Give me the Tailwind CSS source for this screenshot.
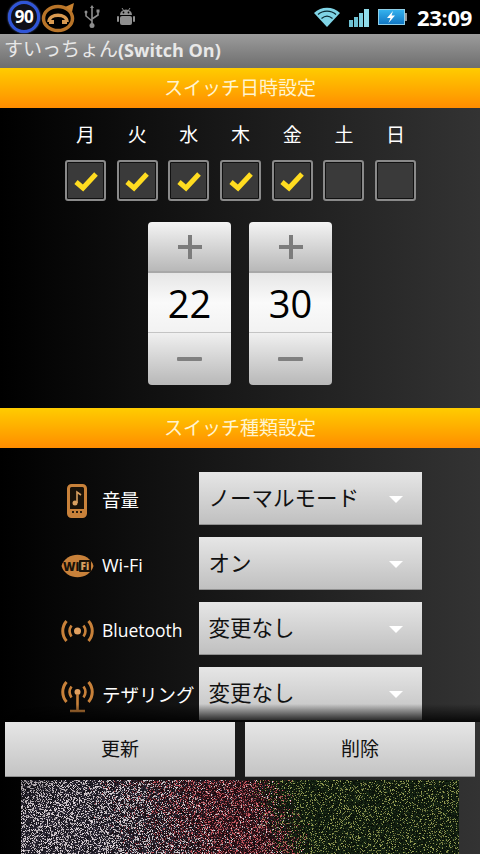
<!doctype html>
<html lang="ja">
  <head>
    <meta charset="UTF-8">
    <title>すいっちょん</title>
    <script src="https://cdn.jsdelivr.net/npm/@tailwindcss/browser@4"></script>
  </head>
  <body class="bg-black">
    <div class="w-[480px] h-[854px] overflow-hidden flex flex-col bg-black text-white font-['Open_Sans','Noto_Sans_CJK_JP',sans-serif]">

      <!-- status bar -->
      <div class="h-[34px] flex items-center pl-[8px] pr-[8px] shrink-0">
        <div class="w-[32px] h-[32px] rounded-full border-[3px] border-[#2f55d8] bg-[#101018] shadow-[0_0_2px_#6f8fff] flex items-center justify-center text-[17px] font-bold text-white tracking-[-0.5px]">90</div>
        <svg class="ml-[1px]" width="35" height="32" viewBox="0 0 35 32" fill="none">
          <ellipse cx="17" cy="17.500" rx="14.500" ry="12" stroke="#b87428" stroke-width="3.500"/>
          <path d="M24 6 L33 2 L31 11 Z" fill="#c8812f"/>
          <path d="M8 21 C8 12 26 12 26 21" stroke="#d99a50" stroke-width="3.500"/>
          <path d="M8 19h5v4H8zM21 19h5v4h-5z" fill="#d99a50"/>
        </svg>
        <svg class="ml-[7px]" width="18" height="24" viewBox="0 0 18 24" fill="none" stroke="#8d8d8d" stroke-width="1.600">
          <path d="M9 3v18M3 8v3l6 5M15 7v3l-6 4"/>
          <path d="M9 0l2 3H7z" fill="#8d8d8d" stroke="none"/>
          <circle cx="3" cy="7" r="1.500" fill="#8d8d8d" stroke="none"/>
          <rect x="13.500" y="4.500" width="3" height="3" fill="#8d8d8d" stroke="none"/>
          <circle cx="9" cy="20.500" r="2.500" fill="#8d8d8d" stroke="none"/>
        </svg>
        <svg class="ml-[15px]" width="20" height="20" viewBox="0 0 20 20" fill="#8f8f8f">
          <path d="M4 8a6 5.500 0 0 1 12 0z"/>
          <path d="M6 1l2 3M14 1l-2 3" stroke="#8f8f8f" stroke-width="1"/>
          <rect x="4" y="9" width="12" height="9" rx="2"/>
          <rect x="1" y="9" width="2" height="6" rx="1"/>
          <rect x="17" y="9" width="2" height="6" rx="1"/>
          <circle cx="7.500" cy="5.500" r="0.900" fill="#000"/>
          <circle cx="12.500" cy="5.500" r="0.900" fill="#000"/>
        </svg>
        <div class="flex-1"></div>
        <svg width="28" height="22" viewBox="0 0 28 22">
          <path d="M1 7 C8 0 20 0 27 7 L14 21 Z" fill="#7fd4e6"/>
          <path d="M5 8.500 C10 4 18 4 23 8.500" stroke="#0b2a33" stroke-width="1.200" fill="none"/>
          <path d="M8.500 12.500 C12 9.500 16 9.500 19.500 12.500" stroke="#0b2a33" stroke-width="1.200" fill="none"/>
        </svg>
        <div class="ml-[8px] flex items-end gap-[1px] h-[20px]">
          <div class="w-[4px] h-[7px] bg-[#6fc2d4]"></div>
          <div class="w-[4px] h-[10px] bg-[#6fc2d4]"></div>
          <div class="w-[4px] h-[14px] bg-[#7fd0e0]"></div>
          <div class="w-[5px] h-[18px] bg-[#8fdcea]"></div>
        </div>
        <div class="ml-[9px] w-[27px] h-[16px] bg-linear-to-b from-[#35b2ee] to-[#1277c4] border border-[#8fcfe8] flex items-center justify-center">
          <svg width="12" height="12" viewBox="0 0 12 12"><path d="M8 0 L2 7 H5.500 L3.500 12 L10 4.500 H6.500 Z" fill="#fff"/></svg>
        </div>
        <div class="w-[2px] h-[8px] bg-[#9a9a9a]"></div>
        <div class="ml-[10px] text-[22px] font-bold leading-none tracking-[-0.3px]">23:09</div>
      </div>

      <!-- title -->
      <div class="h-[34px] shrink-0 pl-[4px] pb-[3px] flex items-center bg-linear-to-b from-[#9c9c9c] to-[#6e6e6e] text-[#e8e8e8] text-[19px] leading-none">
        <span>すいっちょん</span><span class="font-bold text-[18px]">(Switch On)</span>
      </div>

      <!-- scrolling form -->
      <div class="relative flex-1 min-h-0 overflow-hidden bg-linear-to-r/srgb from-black to-[#333333]">
        <div class="h-[40px] flex items-center justify-center bg-linear-to-b from-[#ffcc00] to-[#ff8c00] text-[#fff4d0] text-[19px]">スイッチ日時設定</div>

        <div class="pl-[65px] mt-[14px] flex text-[19px] leading-[26px]">
          <div class="w-[41px] mr-[10.700px] text-center">月</div>
          <div class="w-[41px] mr-[10.700px] text-center">火</div>
          <div class="w-[41px] mr-[10.700px] text-center">水</div>
          <div class="w-[41px] mr-[10.700px] text-center">木</div>
          <div class="w-[41px] mr-[10.700px] text-center">金</div>
          <div class="w-[41px] mr-[10.700px] text-center">土</div>
          <div class="w-[41px] text-center">日</div>
        </div>

        <div class="pl-[65px] mt-[12px] flex">
          <div class="w-[41px] h-[41px] mr-[10.700px] rounded-[3px] border-2 border-[#8a8a8a] bg-[#3a3a3a] shadow-[inset_0_0_0_1px_#111] flex items-center justify-center">
            <svg width="26" height="22" viewBox="0 0 26 22"><path d="M3 12 L10 18 L23 4" fill="none" stroke="#ffdc20" stroke-width="5"/></svg>
          </div>
          <div class="w-[41px] h-[41px] mr-[10.700px] rounded-[3px] border-2 border-[#8a8a8a] bg-[#3a3a3a] shadow-[inset_0_0_0_1px_#111] flex items-center justify-center">
            <svg width="26" height="22" viewBox="0 0 26 22"><path d="M3 12 L10 18 L23 4" fill="none" stroke="#ffdc20" stroke-width="5"/></svg>
          </div>
          <div class="w-[41px] h-[41px] mr-[10.700px] rounded-[3px] border-2 border-[#8a8a8a] bg-[#3a3a3a] shadow-[inset_0_0_0_1px_#111] flex items-center justify-center">
            <svg width="26" height="22" viewBox="0 0 26 22"><path d="M3 12 L10 18 L23 4" fill="none" stroke="#ffdc20" stroke-width="5"/></svg>
          </div>
          <div class="w-[41px] h-[41px] mr-[10.700px] rounded-[3px] border-2 border-[#8a8a8a] bg-[#3a3a3a] shadow-[inset_0_0_0_1px_#111] flex items-center justify-center">
            <svg width="26" height="22" viewBox="0 0 26 22"><path d="M3 12 L10 18 L23 4" fill="none" stroke="#ffdc20" stroke-width="5"/></svg>
          </div>
          <div class="w-[41px] h-[41px] mr-[10.700px] rounded-[3px] border-2 border-[#8a8a8a] bg-[#3a3a3a] shadow-[inset_0_0_0_1px_#111] flex items-center justify-center">
            <svg width="26" height="22" viewBox="0 0 26 22"><path d="M3 12 L10 18 L23 4" fill="none" stroke="#ffdc20" stroke-width="5"/></svg>
          </div>
          <div class="w-[41px] h-[41px] mr-[10.700px] rounded-[3px] border-2 border-[#8a8a8a] bg-[#3a3a3a] shadow-[inset_0_0_0_1px_#111]"></div>
          <div class="w-[41px] h-[41px] rounded-[3px] border-2 border-[#8a8a8a] bg-[#3a3a3a] shadow-[inset_0_0_0_1px_#111]"></div>
        </div>

        <!-- time pickers -->
        <div class="mt-[21px] pl-[148px] flex gap-[18px]">
          <div class="w-[83px] h-[163px] rounded-[4px] overflow-hidden flex flex-col">
            <div class="h-[49px] bg-linear-to-b from-[#f4f4f4] to-[#b8b8b8] flex items-center justify-center">
              <svg width="26" height="26" viewBox="0 0 26 26"><path d="M11 1h4v10h10v4H15v10h-4V15H1v-4h10z" fill="#7c7c7c"/></svg>
            </div>
            <div class="h-[62px] bg-linear-to-b from-[#e6e6e6] via-[#fafafa] to-[#f2f2f2] border-t-2 border-[#a8a8a8] border-b border-b-[#c4c4c4] flex items-center justify-center text-black text-[38px] leading-none">22</div>
            <div class="flex-1 bg-linear-to-b from-[#f0f0f0] to-[#b8b8b8] flex items-center justify-center">
              <div class="w-[25px] h-[4px] rounded-[1px] bg-[#808080]"></div>
            </div>
          </div>
          <div class="w-[83px] h-[163px] rounded-[4px] overflow-hidden flex flex-col">
            <div class="h-[49px] bg-linear-to-b from-[#f4f4f4] to-[#b8b8b8] flex items-center justify-center">
              <svg width="26" height="26" viewBox="0 0 26 26"><path d="M11 1h4v10h10v4H15v10h-4V15H1v-4h10z" fill="#7c7c7c"/></svg>
            </div>
            <div class="h-[62px] bg-linear-to-b from-[#e6e6e6] via-[#fafafa] to-[#f2f2f2] border-t-2 border-[#a8a8a8] border-b border-b-[#c4c4c4] flex items-center justify-center text-black text-[38px] leading-none">30</div>
            <div class="flex-1 bg-linear-to-b from-[#f0f0f0] to-[#b8b8b8] flex items-center justify-center">
              <div class="w-[25px] h-[4px] rounded-[1px] bg-[#808080]"></div>
            </div>
          </div>
        </div>

        <div class="mt-[23px] h-[40px] flex items-center justify-center bg-linear-to-b from-[#ffcc00] to-[#ff8c00] text-[#fff4d0] text-[19px]">スイッチ種類設定</div>

        <!-- switch rows -->
        <div class="mt-[24px] flex flex-col gap-[12px]">
          <div class="flex items-center h-[53px]">
            <div class="w-[102px] pt-[5px] flex justify-end pr-[15px]">
              <svg width="20" height="34" viewBox="0 0 20 34" fill="none">
                <rect x="1.500" y="1.500" width="17" height="31" rx="3" fill="#1a1208" stroke="#c8813a" stroke-width="3"/>
                <path d="M2 25h16v6H2z" fill="#c8813a"/>
                <path d="M5 27h2v2H5zM9 27h2v2H9zM13 27h2v2h-2z" fill="#2a1c0c"/>
                <circle cx="8" cy="19" r="2.500" fill="#d9a060"/>
                <path d="M10 19V8l4 3" stroke="#d9a060" stroke-width="1.600"/>
              </svg>
            </div>
            <div class="w-[97px] pt-[3px] text-[18.500px]">音量</div>
            <div class="relative w-[223px] h-[53px] bg-linear-to-b from-[#e6e6e6] to-[#c0c0c0] border-b border-[#909090] flex items-center pl-[9.500px] text-[#111] text-[21.500px]">ノーマルモード
              <div class="absolute right-[19px] top-[24px] w-0 h-0 border-x-[7px] border-x-transparent border-t-[7px] border-t-white"></div>
            </div>
          </div>
          <div class="flex items-center h-[53px]">
            <div class="w-[102px] pt-[4px] flex justify-end pr-[8px]">
              <svg width="33" height="26" viewBox="0 0 33 26">
                <path d="M0.500 13 C5 -2 28 -2 32.500 13 C28 28 5 28 0.500 13 Z" fill="#c8813a"/>
                <rect x="18" y="7" width="12" height="12" rx="1" fill="#1a1208"/>
                <text x="2" y="17.500" font-size="12" font-weight="800" fill="#1a1208" font-family="Open Sans">Wi</text>
                <text x="19.500" y="17" font-size="10" font-weight="800" fill="#d9a060" font-family="Open Sans">Fi</text>
              </svg>
            </div>
            <div class="w-[97px] pt-[3px] text-[18px]">Wi-Fi</div>
            <div class="relative w-[223px] h-[53px] bg-linear-to-b from-[#e6e6e6] to-[#c0c0c0] border-b border-[#909090] flex items-center pl-[9.500px] text-[#111] text-[21.500px]">オン
              <div class="absolute right-[19px] top-[24px] w-0 h-0 border-x-[7px] border-x-transparent border-t-[7px] border-t-white"></div>
            </div>
          </div>
          <div class="flex items-center h-[53px]">
            <div class="w-[102px] pt-[4px] flex justify-end pr-[8px]">
              <svg width="33" height="24" viewBox="0 0 33 24" fill="none" stroke="#c8813a" stroke-width="2.600">
                <circle cx="16.500" cy="12" r="3.500" fill="#e0a060" stroke="none"/>
                <path d="M10.500 6.500 C8 10 8 14 10.500 17.500M22.500 6.500 C25 10 25 14 22.500 17.500"/>
                <path d="M5.500 2 C0.500 8 0.500 16 5.500 22M27.500 2 C32.500 8 32.500 16 27.500 22" stroke-width="3"/>
              </svg>
            </div>
            <div class="w-[97px] pt-[3px] text-[17.500px]">Bluetooth</div>
            <div class="relative w-[223px] h-[53px] bg-linear-to-b from-[#e6e6e6] to-[#c0c0c0] border-b border-[#909090] flex items-center pl-[9.500px] text-[#111] text-[21.500px]">変更なし
              <div class="absolute right-[19px] top-[24px] w-0 h-0 border-x-[7px] border-x-transparent border-t-[7px] border-t-white"></div>
            </div>
          </div>
          <div class="flex items-center h-[53px]">
            <div class="w-[102px] pt-[5px] flex justify-end pr-[8px]">
              <svg width="33" height="33" viewBox="0 0 33 33" fill="none" stroke="#c8813a" stroke-width="2.600">
                <circle cx="16.500" cy="12" r="3" fill="#e0a060" stroke="none"/>
                <path d="M16.500 14v16M9 31h15"/>
                <path d="M10.500 6.500 C8 10 8 14 10.500 17.500M22.500 6.500 C25 10 25 14 22.500 17.500"/>
                <path d="M5.500 2 C0.500 8 0.500 16 5.500 22M27.500 2 C32.500 8 32.500 16 27.500 22" stroke-width="3"/>
              </svg>
            </div>
            <div class="w-[97px] pt-[3px] text-[18.500px] whitespace-nowrap">テザリング</div>
            <div class="relative w-[223px] h-[53px] bg-linear-to-b from-[#e6e6e6] to-[#c0c0c0] flex items-center pl-[9.500px] text-[#111] text-[21.500px]">変更なし
              <div class="absolute right-[19px] top-[24px] w-0 h-0 border-x-[7px] border-x-transparent border-t-[7px] border-t-white"></div>
            </div>
          </div>
        </div>

        <!-- scroll fade -->
        <div class="absolute left-0 right-0 bottom-0 h-[18px] bg-linear-to-b from-transparent to-black/85"></div>
      </div>

      <!-- bottom bar -->
      <div class="h-[58px] shrink-0 px-[5px] flex gap-[10px] bg-linear-to-r/srgb from-black to-[#333333]">
        <div class="w-[230px] h-[55px] bg-linear-to-b from-[#e6e6e6] to-[#c4c4c4] border-b border-[#909090] flex items-center justify-center text-[#111] text-[19px]">更新</div>
        <div class="w-[230px] h-[55px] bg-linear-to-b from-[#e6e6e6] to-[#c4c4c4] border-b border-[#909090] flex items-center justify-center text-[#111] text-[19px]">削除</div>
      </div>

      <!-- ad banner -->
      <div class="h-[74px] shrink-0 px-[21px] bg-linear-to-r/srgb from-black to-[#333333]">
        <canvas id="banner" width="438" height="74" class="block blur-[0.6px]"></canvas>
      </div>
    </div>

    <script>
      // speckle noise for the banner: white-ish left, red middle, green right
      const ctx = document.getElementById("banner").getContext("2d")
      const img = ctx.createImageData(438, 74)
      let seed = 12345
      const rnd = () => {
        seed = (seed * 1664525 + 1013904223) % 4294967296
        return seed / 4294967296
      }
      const smooth = (a, b, x) => {
        const t = Math.min(1, Math.max(0, (x - a) / (b - a)))
        return t * t * (3 - 2 * t)
      }
      const regions = [
        { dark: [46, 42, 56], hi: [232, 222, 228], density: 0.36 },
        { dark: [58, 22, 28], hi: [215, 95, 105], density: 0.3 },
        { dark: [22, 38, 20], hi: [160, 170, 90], density: 0.16 },
      ]
      for (let y = 0; y < 74; y++) {
        for (let x = 0; x < 438; x++) {
          // the colour areas lean a bit, the top left is dimmer
          const u = x / 438 - (y / 74 - 0.5) * 0.06
          const toRed = smooth(0.15, 0.5, u) * 0.8
          const toGreen = smooth(0.52, 0.66, u)
          const pick = rnd()
          const r = pick < toGreen ? regions[2] : pick < toRed + toGreen * 0.2 ? regions[1] : regions[0]
          const dim = 0.75 + 0.25 * smooth(0, 0.2, u + y / 200)
          const n = rnd()
          const c = n < r.density ? r.hi : r.dark
          const k = (n < r.density ? 0.6 + rnd() * 0.4 : 0.3 + rnd() * 0.9) * dim
          const i = (y * 438 + x) * 4
          img.data[i] = c[0] * k
          img.data[i + 1] = c[1] * k
          img.data[i + 2] = c[2] * k
          img.data[i + 3] = 255
        }
      }
      ctx.putImageData(img, 0, 0)
    </script>
  </body>
</html>
